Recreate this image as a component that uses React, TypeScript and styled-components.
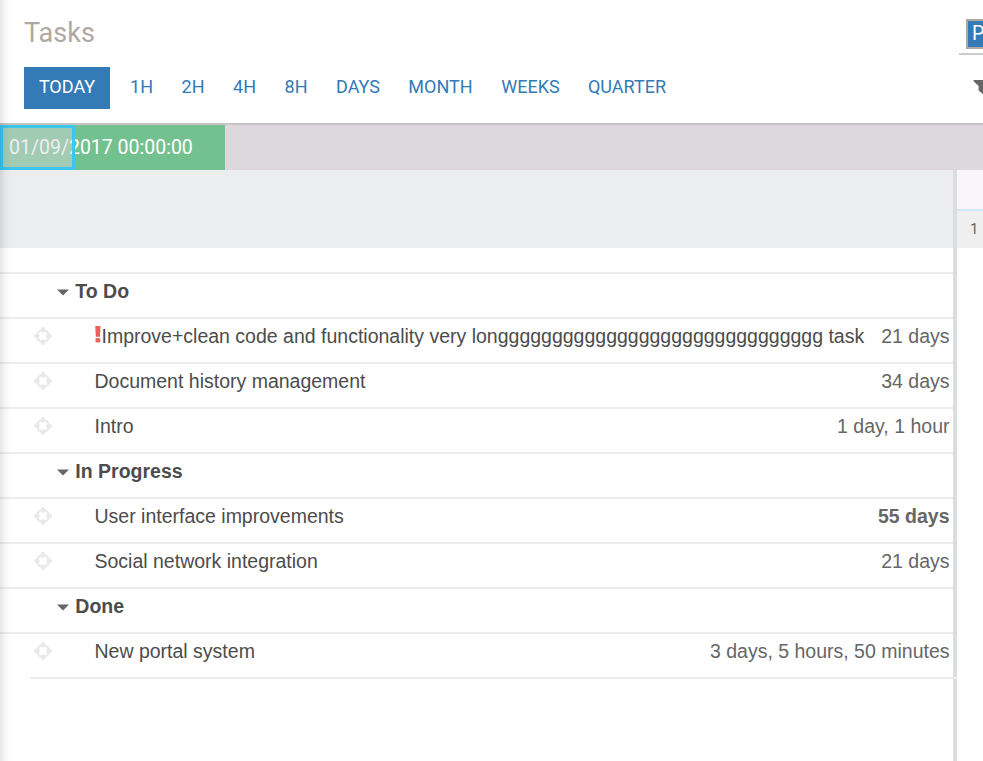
import React from 'react';
import styled, { createGlobalStyle } from 'styled-components';

const GlobalStyle = createGlobalStyle`
  *, *::before, *::after { box-sizing: border-box; }
  html, body { margin: 0; background: #fff; overflow: hidden; }
`;

const Page = styled.div`
  position: relative;
  width: 983px;
  height: 761px;
  display: flex;
  flex-direction: column;
  overflow: hidden;
  background: #fff;
  font-family: 'Liberation Sans', Arial, sans-serif;
`;

const EdgeShadow = styled.div`
  position: absolute;
  z-index: 2;
  inset: 0 auto 0 0;
  width: 11px;
  background: linear-gradient(to right, rgba(0, 0, 0, 0.1), rgba(0, 0, 0, 0.03) 50%, rgba(0, 0, 0, 0));
  pointer-events: none;
`;

const Header = styled.header`
  height: 125px;
  flex: none;
  display: flex;
  justify-content: space-between;
  border-bottom: 2px solid #c4c4c6;
  font-family: Roboto, sans-serif;
`;

const HeaderMain = styled.div`
  padding: 15px 0 0 24px;
`;

const Title = styled.h1`
  margin: 0 0 16px;
  height: 36px;
  font-size: 27px;
  font-weight: 400;
  line-height: 36px;
  color: #afa8a0;
`;

const Scales = styled.nav`
  display: flex;
  height: 42px;
`;

const Scale = styled.button<{ $width: number; $active?: boolean }>`
  width: ${(p) => p.$width}px;
  height: 42px;
  flex: none;
  padding: 0 0 4px;
  border: 0;
  background: ${(p) => (p.$active ? '#337ab7' : 'transparent')};
  color: ${(p) => (p.$active ? '#fff' : '#337ab7')};
  font: 400 18px Roboto, sans-serif;
  white-space: nowrap;
`;

const HeaderSide = styled.div`
  width: 24px;
  flex: none;
  display: flex;
  flex-direction: column;
  align-items: flex-end;
  overflow: hidden;
  padding-top: 19px;
`;

const Facet = styled.div`
  width: 17px;
  height: 30px;
  flex: none;
  padding-left: 4px;
  overflow: hidden;
  border: 2px solid #afa8a0;
  border-right: 0;
  background: #337ab7;
  color: #fff;
  font-size: 19.5px;
  line-height: 25px;
`;

const SearchRule = styled.div`
  width: 24px;
  height: 2px;
  margin: 4px 0 25px;
  flex: none;
  background: #ccc;
`;

const FilterIcon = styled.svg`
  width: 10px;
  height: 16px;
  display: block;
`;

const RangeBar = styled.div`
  height: 45px;
  flex: none;
  background: #dcd8de;
`;

const RangeValue = styled.div`
  position: relative;
  width: 225px;
  height: 45px;
  padding-left: 9px;
  background: #74c190;
  color: #fff;
  font: 400 19.5px/45px Roboto, sans-serif;
  white-space: nowrap;
`;

const RangeHandle = styled.div`
  position: absolute;
  inset: 0 auto 0 0;
  width: 75px;
  border: 3px solid #3cc6f0;
  background: rgba(220, 216, 222, 0.45);
`;

const Body = styled.main`
  flex: 1;
  min-height: 0;
  display: flex;
`;

const TaskPane = styled.section`
  width: 953px;
  flex: none;
  position: relative;
  z-index: 1;
`;

const PaneHead = styled.div`
  height: 78px;
  background: #ecedef;
`;

const Spacer = styled.div`
  height: 26px;
  border-bottom: 2px solid #ededed;
`;

const Row = styled.div<{ $last?: boolean }>`
  height: 45px;
  width: ${(p) => (p.$last ? 927 : 953)}px;
  margin-left: ${(p) => (p.$last ? 30 : 0)}px;
  padding: 0 ${(p) => (p.$last ? 7.5 : 3.5)}px 9px ${(p) => (p.$last ? 3 : 33)}px;
  display: flex;
  align-items: center;
  border-bottom: 2px solid #ededed;
  font-size: 19.5px;
  white-space: nowrap;
`;

const Target = styled.svg`
  width: 20px;
  height: 20px;
  flex: none;
  margin-right: 41.5px;
`;

const Caret = styled.svg`
  width: 12px;
  height: 7px;
  flex: none;
  margin: 2px 6.3px 0 24px;
`;

const GroupName = styled.span`
  font-weight: 700;
  color: #4c4c4c;
`;

const TaskName = styled.span`
  display: flex;
  align-items: center;
  color: #4c4c4c;
`;

const Alert = styled.svg`
  width: 6px;
  height: 17px;
  margin: 0 1px 4px 0;
`;

const Duration = styled.span<{ $bold?: boolean }>`
  margin-left: auto;
  font-weight: ${(p) => (p.$bold ? 700 : 400)};
  color: #666;
`;

const Divider = styled.div`
  width: 4px;
  flex: none;
  background: #dcdde1;
`;

const Timeline = styled.section`
  flex: 1;
`;

const TimelineTop = styled.div`
  height: 41px;
  border-bottom: 2px solid #cdeaf5;
  background: #f8f6f8;
`;

const TimelineDay = styled.div`
  height: 37px;
  padding-left: 13px;
  background: #efeff0;
  color: #666;
  font: 400 15px/36px Roboto, sans-serif;
`;

const scales = [
  { label: 'TODAY', width: 86, active: true },
  { label: '1H', width: 63 },
  { label: '2H', width: 40 },
  { label: '4H', width: 63 },
  { label: '8H', width: 40 },
  { label: 'DAYS', width: 84 },
  { label: 'MONTH', width: 81 },
  { label: 'WEEKS', width: 99 },
  { label: 'QUARTER', width: 94 },
];

interface Task {
  name: string;
  duration: string;
  urgent?: boolean;
  bold?: boolean;
}

const groups: { name: string; tasks: Task[] }[] = [
  {
    name: 'To Do',
    tasks: [
      {
        name: `Improve+clean code and functionality very lon${'g'.repeat(30)} task`,
        duration: '21 days',
        urgent: true,
      },
      { name: 'Document history management', duration: '34 days' },
      { name: 'Intro', duration: '1 day, 1 hour' },
    ],
  },
  {
    name: 'In Progress',
    tasks: [
      { name: 'User interface improvements', duration: '55 days', bold: true },
      { name: 'Social network integration', duration: '21 days' },
    ],
  },
  { name: 'Done', tasks: [{ name: 'New portal system', duration: '3 days, 5 hours, 50 minutes' }] },
];

function TargetIcon() {
  return (
    <Target viewBox="0 0 20 20" fill="none" stroke="#e9e9e9">
      <circle cx="10" cy="10" r="6" strokeWidth="2.2" />
      <path d="M10 1.2v5.4M10 13.4v5.4M1.2 10h5.4M13.4 10h5.4" strokeWidth="3.4" />
    </Target>
  );
}

export default function App() {
  return (
    <Page>
      <GlobalStyle />
      <Header>
        <HeaderMain>
          <Title>Tasks</Title>
          <Scales>
            {scales.map((s) => (
              <Scale key={s.label} $width={s.width} $active={s.active}>
                {s.label}
              </Scale>
            ))}
          </Scales>
        </HeaderMain>
        <HeaderSide>
          <Facet>P</Facet>
          <SearchRule />
          <FilterIcon viewBox="0 0 10 16">
            <path d="M0.6 0H14V1L10 6V14L5.6 10.5V6L0.6 1.2Z" fill="#666" />
          </FilterIcon>
        </HeaderSide>
      </Header>
      <RangeBar>
        <RangeValue>
          01/09/2017 00:00:00
          <RangeHandle />
        </RangeValue>
      </RangeBar>
      <Body>
        <TaskPane>
          <PaneHead />
          <Spacer />
          {groups.map((group, gi) => (
            <React.Fragment key={group.name}>
              <Row>
                <Caret viewBox="0 0 12 7">
                  <path d="M0 0.5H12L6 6.5Z" fill="#666" />
                </Caret>
                <GroupName>{group.name}</GroupName>
              </Row>
              {group.tasks.map((task, ti) => (
                <Row key={task.name} $last={gi === groups.length - 1 && ti === group.tasks.length - 1}>
                  <TargetIcon />
                  <TaskName>
                    {task.urgent && (
                      <Alert viewBox="0 0 6 17" fill="#ee5f5b">
                        <path d="M0.3 0H5.5L5 10.8H0.8Z" />
                        <rect x="0.6" y="12.2" width="4.7" height="4.2" />
                      </Alert>
                    )}
                    {task.name}
                  </TaskName>
                  <Duration $bold={task.bold}>{task.duration}</Duration>
                </Row>
              ))}
            </React.Fragment>
          ))}
        </TaskPane>
        <Divider />
        <Timeline>
          <TimelineTop />
          <TimelineDay>1</TimelineDay>
        </Timeline>
      </Body>
      <EdgeShadow />
    </Page>
  );
}
